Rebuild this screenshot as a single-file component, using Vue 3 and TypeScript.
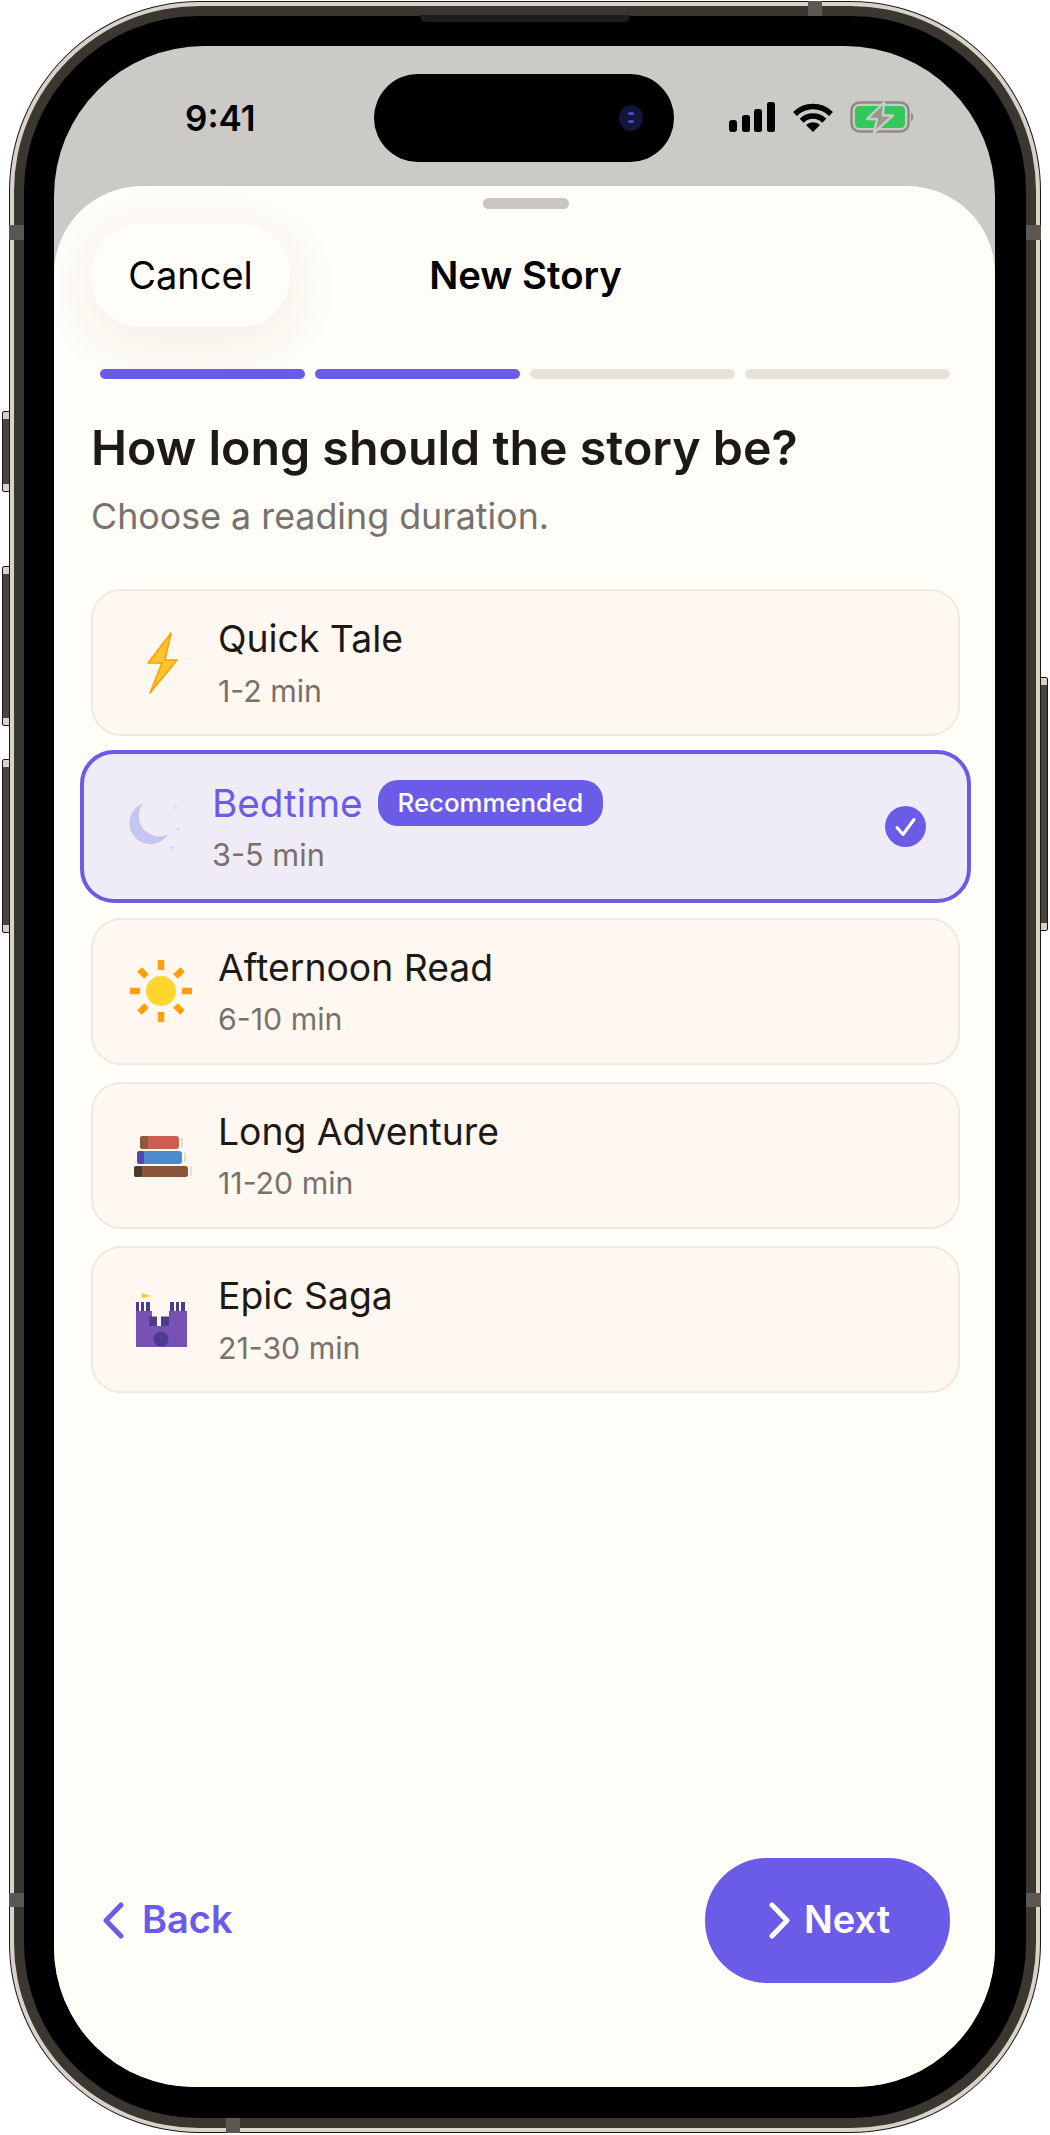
<template>
  <div class="stage">
    <div class="phone">
      <!-- hardware bits on the frame -->
      <span class="side-btn silent"></span>
      <span class="side-btn vol-up"></span>
      <span class="side-btn vol-down"></span>
      <span class="side-btn power"></span>
      <span class="band band-top"></span>
      <span class="band band-bottom"></span>
      <span class="band band-l1"></span>
      <span class="band band-r1"></span>
      <span class="band band-l2"></span>
      <span class="band band-r2"></span>
      <span class="speaker"></span>

      <div class="rim">
        <div class="metal">
          <div class="bezel">
            <div class="screen">
              <div class="status-bar">
                <div class="time">9:41</div>
                <div class="island">
                  <span class="camera"><i></i><i></i></span>
                </div>
                <div class="status-icons">
                  <svg class="signal" width="47" height="31" viewBox="0 0 47 31">
                    <rect x="1" y="18" width="8" height="12" rx="3" />
                    <rect x="14" y="13" width="8" height="17" rx="2.5" />
                    <rect x="26" y="7" width="8" height="23" rx="2.5" />
                    <rect x="39" y="0" width="8" height="30" rx="2.5" />
                  </svg>
                  <svg class="wifi" width="40" height="31" viewBox="0 0 40 31">
                    <path d="M2 12 A25.5 25.5 0 0 1 38 12" fill="none" stroke="#000" stroke-width="5.6" />
                    <path d="M8.7 18.7 A16 16 0 0 1 31.3 18.7" fill="none" stroke="#000" stroke-width="5.6" />
                    <path d="M20 30 L13 23 A10 10 0 0 1 27 23 Z" fill="#000" />
                  </svg>
                  <svg class="battery" width="66" height="33" viewBox="0 0 66 33">
                    <rect x="1.5" y="1.5" width="57" height="29" rx="8" fill="none" stroke="#8e8b86" stroke-width="2.6" />
                    <rect x="5" y="5" width="50" height="22" rx="4.5" fill="#34c759" />
                    <path d="M61 12 C64 13 64 19 61 20 Z" fill="#8e8b86" />
                    <path d="M34 1.5 L17 18 H27 L24 31.5 L43 14.5 H33 Z" fill="#9a9793" stroke="#cbcac6" stroke-width="2.4" stroke-linejoin="round" />
                  </svg>
                </div>
              </div>

              <div class="sheet">
                <div class="handle"></div>
                <header class="sheet-header">
                  <button class="cancel">Cancel</button>
                  <div class="sheet-title">New Story</div>
                  <span></span>
                </header>

                <div class="progress">
                  <span
                    v-for="n in 4"
                    :key="n"
                    :class="['segment', { done: n <= step }]"
                  ></span>
                </div>

                <h1>How long should the story be?</h1>
                <p class="subtitle">Choose a reading duration.</p>

                <div class="options">
                  <div
                    v-for="option in options"
                    :key="option.id"
                    :class="['option', { selected: option.id === selectedId }]"
                  >
                    <svg class="option-icon" width="72" height="72" viewBox="0 0 72 72">
                      <template v-if="option.id === 'quick'">
                        <path d="M46 6 L23 36 H37 L25 66 L52 33 H40 Z" fill="#ffc42e" stroke="#ff9f0a" stroke-width="1.6" stroke-linejoin="round" />
                      </template>
                      <template v-else-if="option.id === 'bedtime'">
                        <path d="M23 12.5 A21 21 0 1 0 48 43.5 A20.5 20.5 0 0 1 23 12.5 Z" fill="#c5c6f0" />
                        <path d="M55 13 v6 M52 16 h6 M58 36 v4 M56 38 h4 M52 54 v5 M49.500 56.500 h5" stroke="#d6d4f2" stroke-width="1" fill="none" />
                      </template>
                      <template v-else-if="option.id === 'afternoon'">
                        <g stroke="#ff9f0a" stroke-width="6.5">
                          <path d="M36 5 V15 M36 57 V67 M5 36 H15 M57 36 H67" />
                          <path d="M14.500 14.500 L21.500 21.500 M57.500 14.500 L50.500 21.500 M14.500 57.500 L21.500 50.500 M57.500 57.500 L50.500 50.500" />
                        </g>
                        <circle cx="36" cy="36" r="15" fill="#ffd62e" />
                      </template>
                      <template v-else-if="option.id === 'long'">
                        <rect x="15" y="17" width="39" height="13" rx="3" fill="#cd5c52" />
                        <rect x="15" y="17" width="8" height="13" rx="2.5" fill="#8b5a3c" />
                        <rect x="56" y="19" width="2" height="9" fill="#e4dfd6" />
                        <rect x="12" y="32" width="45" height="13" rx="3" fill="#4a8bcb" />
                        <rect x="12" y="32" width="7" height="13" rx="2.5" fill="#5247b0" />
                        <rect x="59" y="34" width="2" height="9" fill="#e4dfd6" />
                        <rect x="9" y="47" width="54" height="11" rx="2.500" fill="#8b5638" />
                        <rect x="9" y="47" width="8" height="11" rx="2.500" fill="#4a3b32" />
                        <rect x="65" y="48" width="2" height="9" fill="#e4dfd6" />
                      </template>
                      <template v-else>
                        <path d="M17 9 L26 12 L17 14 Z" fill="#ffc42e" />
                        <path d="M11 27 H27 V42 H44 V27 H62 V63 H11 Z" fill="#7852b3" />
                        <path d="M11 18 h3 v9 h-3 Z M16 18 h3 v9 h-3 Z M21 18 h4 v9 h-4 Z M45 18 h4 v9 h-4 Z M51 18 h3 v9 h-3 Z M56 18 h4 v9 h-4 Z M24 32.500 h8 v9.500 h-8 Z M36 32.500 h8 v9.500 h-8 Z" fill="#4e3a8f" />
                        <circle cx="36" cy="55" r="7.500" fill="#4e3a8f" />
                      </template>
                    </svg>
                    <div class="option-text">
                      <div class="option-name">
                        <span>{{ option.name }}</span>
                        <span v-if="option.badge" class="badge">{{ option.badge }}</span>
                      </div>
                      <div class="option-time">{{ option.time }}</div>
                    </div>
                    <svg v-if="option.id === selectedId" class="check" width="41" height="41" viewBox="0 0 41 41">
                      <circle cx="20.500" cy="20.500" r="20.500" fill="#6b5ce7" />
                      <path d="M12 21.500 L18 28.500 L29 13.500" fill="none" stroke="#fff" stroke-width="3" stroke-linecap="round" stroke-linejoin="round" />
                    </svg>
                  </div>
                </div>

                <footer class="sheet-footer">
                  <button class="back">
                    <svg width="22" height="37" viewBox="0 0 22 37">
                      <path d="M19 3 L4 18.500 L19 34" fill="none" stroke="currentColor" stroke-width="5" stroke-linecap="round" stroke-linejoin="round" />
                    </svg>
                    Back
                  </button>
                  <button class="next">
                    <svg width="22" height="37" viewBox="0 0 22 37">
                      <path d="M3 3 L18 18.500 L3 34" fill="none" stroke="currentColor" stroke-width="5" stroke-linecap="round" stroke-linejoin="round" />
                    </svg>
                    Next
                  </button>
                </footer>
              </div>
            </div>
          </div>
        </div>
      </div>
    </div>
  </div>
</template>

<script setup lang="ts">
import { ref } from 'vue'

interface DurationOption {
  id: string
  name: string
  time: string
  badge?: string
}

const step = ref(2)
const selectedId = ref('bedtime')

const options = ref<DurationOption[]>([
  { id: 'quick', name: 'Quick Tale', time: '1-2 min' },
  { id: 'bedtime', name: 'Bedtime', time: '3-5 min', badge: 'Recommended' },
  { id: 'afternoon', name: 'Afternoon Read', time: '6-10 min' },
  { id: 'long', name: 'Long Adventure', time: '11-20 min' },
  { id: 'epic', name: 'Epic Saga', time: '21-30 min' },
])
</script>

<style>
html,
body {
  margin: 0;
  background: #fff;
}
</style>

<style scoped>
.stage {
  width: 1050px;
  height: 2135px;
  padding: 1px 9px 2px;
  box-sizing: border-box;
  font-family: Inter, "Liberation Sans", sans-serif;
  overflow: hidden;
}

.phone {
  position: relative;
  height: 100%;
  background: #1a1815;
  border-radius: 190px;
  padding: 1px;
  box-sizing: border-box;
}

.rim {
  height: 100%;
  box-sizing: border-box;
  background: #d8d2c9;
  border-radius: 189px;
  padding: 4px;
}

.metal {
  height: 100%;
  box-sizing: border-box;
  background: #3a3630;
  border-radius: 185px;
  padding: 10px;
}

.bezel {
  height: 100%;
  box-sizing: border-box;
  background: #000;
  border-radius: 175px;
  padding: 30px 31px 31px 30px;
}

.screen {
  height: 100%;
  display: flex;
  flex-direction: column;
  background: #cbcac6;
  border-radius: 150px 150px 140px 140px;
  overflow: hidden;
}

.side-btn {
  position: absolute;
  width: 8px;
  background: linear-gradient(#d8d2c9 0 7px, #4a453e 7px calc(100% - 7px), #d8d2c9 calc(100% - 7px));
  border: 1px solid #1a1815;
  border-radius: 2px 0 0 2px;
  box-sizing: border-box;
}

.silent { left: -7px; top: 410px; height: 81px; }
.vol-up { left: -7px; top: 565px; height: 160px; }
.vol-down { left: -7px; top: 758px; height: 174px; }
.power { right: -7px; top: 676px; height: 254px; border-radius: 0 2px 2px 0; }

.band {
  position: absolute;
  background: #5c5750;
}

.band-top { left: 799px; top: 0; width: 14px; height: 15px; }
.band-bottom { left: 217px; bottom: 0; width: 14px; height: 15px; }
.band-l1 { left: 0; top: 224px; width: 15px; height: 15px; }
.band-r1 { right: 0; top: 224px; width: 15px; height: 15px; }
.band-l2 { left: 0; top: 1892px; width: 15px; height: 14px; }
.band-r2 { right: 0; top: 1892px; width: 15px; height: 14px; }

.speaker {
  position: absolute;
  left: 411px;
  top: 14px;
  width: 210px;
  height: 7px;
  background: #1f1d1a;
  border-radius: 0 0 6px 6px;
}

.status-bar {
  height: 140px;
  flex-shrink: 0;
  display: grid;
  grid-template-columns: 320px 300px 1fr;
  align-items: center;
  box-sizing: border-box;
  padding-top: 3px;
}

.time {
  padding-left: 131px;
  font-size: 35px;
  font-weight: 600;
  color: #000;
}

.island {
  height: 88px;
  background: #000;
  border-radius: 44px;
  display: flex;
  align-items: center;
  justify-content: flex-end;
  padding-right: 31px;
  box-sizing: border-box;
}

.camera {
  width: 24px;
  height: 26px;
  border-radius: 50%;
  background: #11163a;
  display: flex;
  flex-direction: column;
  align-items: center;
  justify-content: center;
  gap: 5px;
}

.camera i {
  width: 6px;
  height: 3px;
  border-radius: 2px;
  background: #5b45b8;
}

.status-icons {
  display: flex;
  align-items: center;
  padding-left: 54px;
}

.signal {
  fill: #000;
}

.wifi {
  margin-left: 18px;
}

.battery {
  margin-left: 17px;
}

.sheet {
  flex: 1;
  display: flex;
  flex-direction: column;
  background: #fffdf7;
  border-radius: 88px 88px 0 0;
  padding: 12px 35px 104.5px 37px;
  box-sizing: border-box;
  min-height: 0;
}

.handle {
  width: 86px;
  height: 11px;
  border-radius: 6px;
  background: #c9c6c0;
  align-self: center;
  flex-shrink: 0;
}

.sheet-header {
  margin-top: 15px;
  display: grid;
  grid-template-columns: 1fr auto 1fr;
  align-items: center;
}

button {
  font-family: inherit;
  border: 0;
  padding: 0;
  cursor: pointer;
}

.cancel {
  width: 199px;
  height: 103px;
  padding-bottom: 2px;
  border-radius: 50px;
  background: #fefdf8;
  box-shadow: 0 12px 60px rgba(60, 50, 30, 0.08);
  font-size: 38px;
  font-weight: 400;
  color: #000;
}

.sheet-title {
  font-size: 38.3px;
  font-weight: 600;
  color: #000;
  padding-bottom: 2px;
}

.progress {
  margin: 42px 10px 0 9px;
  display: flex;
  gap: 10px;
}

.segment {
  flex: 1;
  height: 10px;
  border-radius: 5px;
  background: #e8e2d9;
}

.segment.done {
  background: #6b5ce7;
}

h1 {
  margin: 41px 0 0;
  font-size: 48.3px;
  line-height: 56px;
  font-weight: 600;
  color: #1c1917;
}

.subtitle {
  margin: 18px 0 0;
  font-size: 35.8px;
  line-height: 44px;
  color: #78716c;
}

.options {
  margin-top: 51px;
  display: flex;
  flex-direction: column;
  gap: 17.3px;
}

.option {
  height: 147px;
  box-sizing: border-box;
  display: flex;
  align-items: center;
  gap: 21px;
  padding-left: 32px;
  background: #fff8f0;
  border: 2px solid #efe9e0;
  border-radius: 30px;
}

.option.selected {
  height: 153px;
  margin: -3px -11px;
  padding: 0 41px 0 36px;
  gap: 20px;
  background: #efecf8;
  border: 4px solid #6b5ce7;
  border-radius: 34px;
}

.option-text {
  flex: 1;
  display: flex;
  flex-direction: column;
  gap: 10px;
}

.option-name {
  display: flex;
  align-items: center;
  gap: 15px;
  height: 46px;
  font-size: 37.3px;
  color: #1c1917;
}

.selected .option-name {
  font-size: 38.7px;
  color: #6b5ce7;
}

.option-time {
  font-size: 30.3px;
  line-height: 38px;
  color: #78716c;
}

.selected .option-time {
  font-size: 30.7px;
}

.badge {
  height: 46px;
  box-sizing: border-box;
  padding: 0 20px;
  display: flex;
  align-items: center;
  border-radius: 20px;
  background: #6b5ce7;
  color: #fff;
  font-size: 25.8px;
  font-weight: 500;
}

.sheet-footer {
  margin-top: auto;
  padding: 0 10px 0 11px;
  display: flex;
  align-items: center;
  justify-content: space-between;
}

.back,
.next {
  display: flex;
  align-items: center;
  gap: 18px;
  font-size: 38px;
  font-weight: 600;
  padding-bottom: 2px;
}

.back svg,
.next svg {
  margin-top: 2px;
}

.back {
  background: none;
  color: #6b5ce7;
}

.next {
  width: 245px;
  height: 125px;
  gap: 13px;
  padding-left: 4px;
  justify-content: center;
  border-radius: 62px;
  background: #6b5ce7;
  color: #fff;
}
</style>
